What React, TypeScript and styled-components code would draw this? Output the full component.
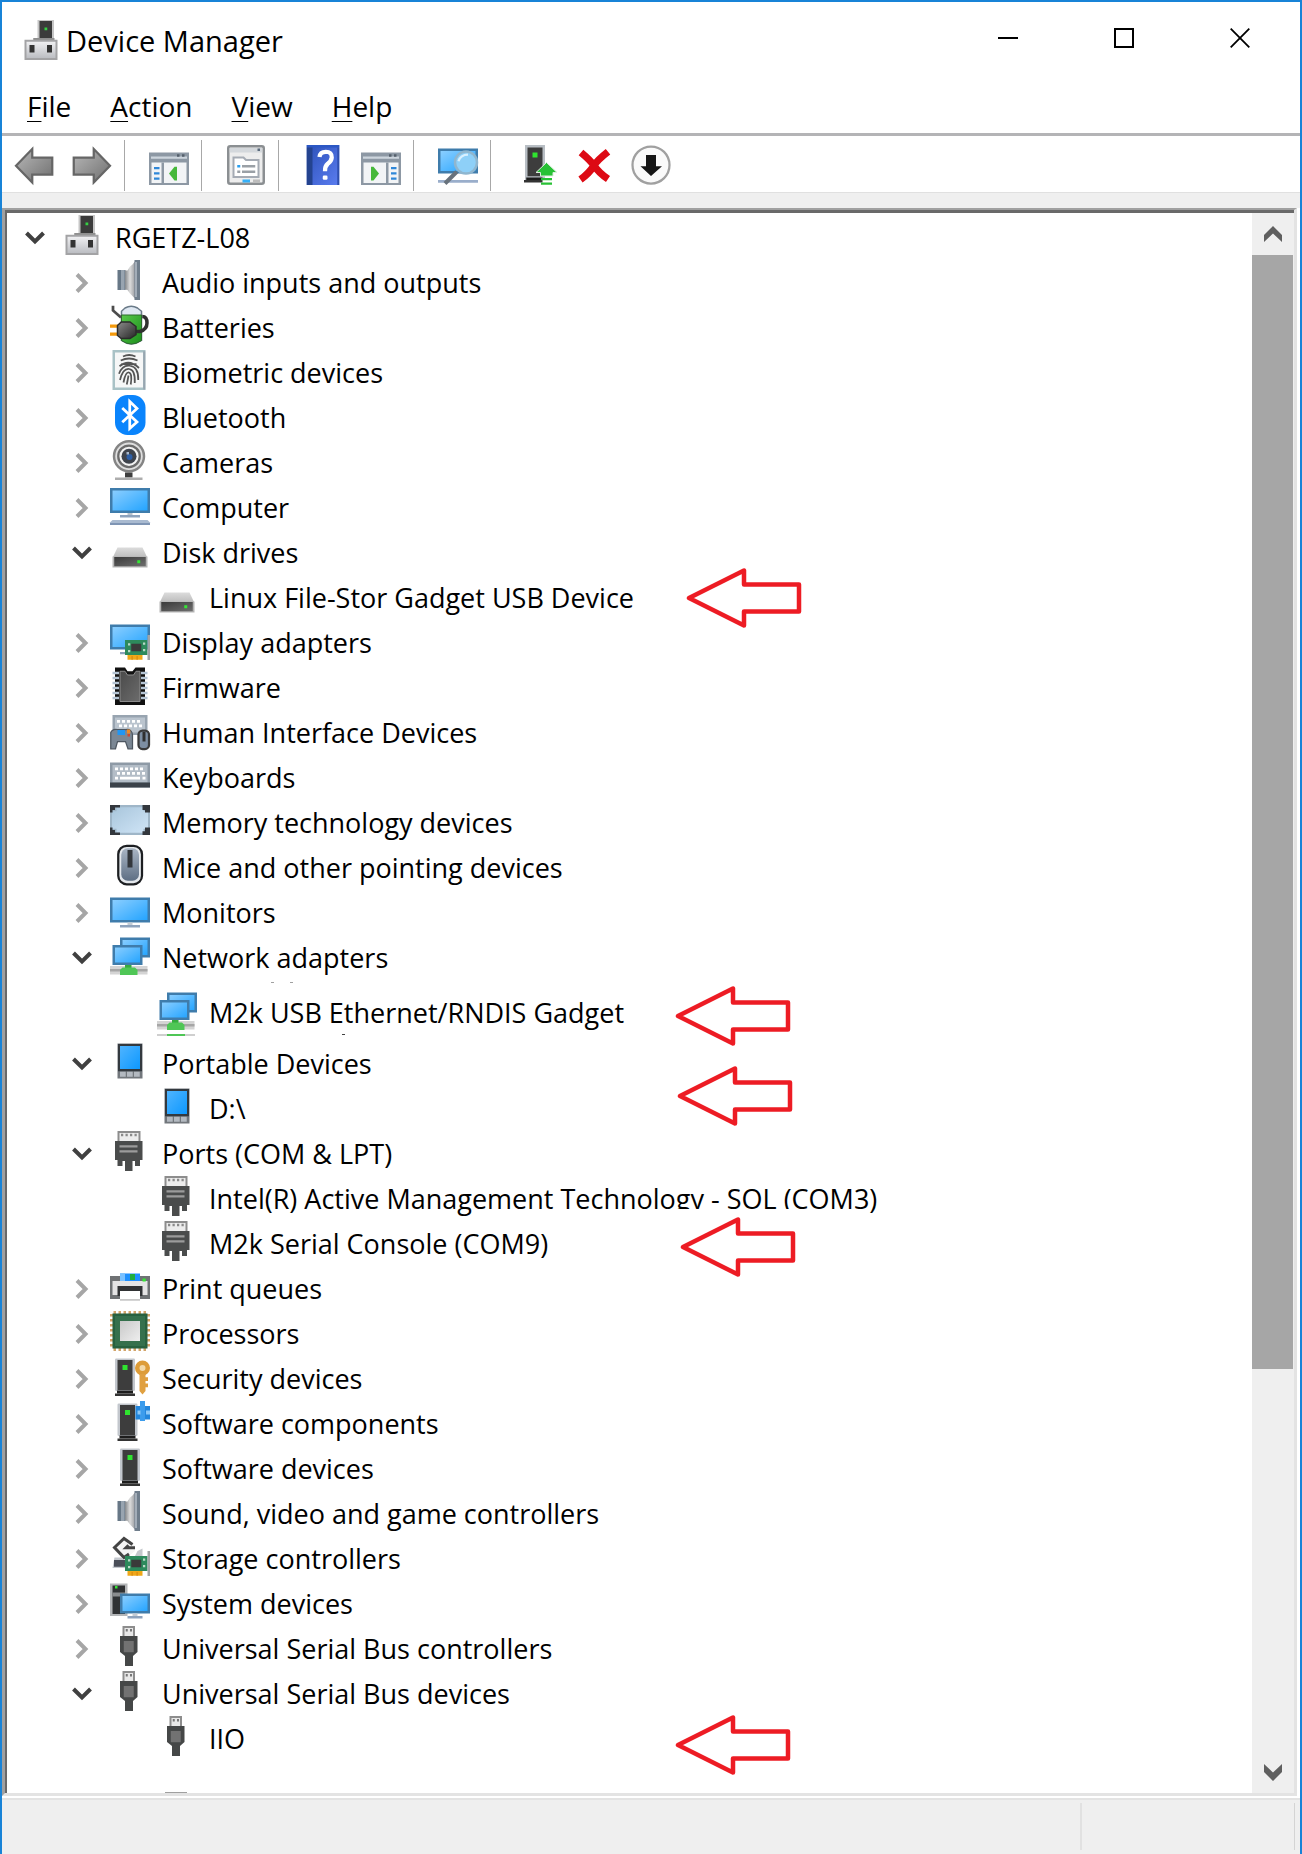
import React from "react";
import styled, { createGlobalStyle, css } from "styled-components";

const GlobalStyle = createGlobalStyle`
  * { box-sizing: border-box; }
  body { margin: 0; background: #ffffff; }
`;

/* ---------- window frame ---------- */

const Window = styled.main`
  display: flex;
  flex-direction: column;
  min-height: 100vh;
  border: 2px solid #1883d7;
  border-bottom: 0;
  background: #ffffff;
  color: #000000;
  font-family: "Open Sans", "Noto Sans", sans-serif;
  font-size: 28px;
  line-height: 45px;
`;

const TitleBar = styled.header`
  display: flex;
  align-items: center;
  height: 76px;
  padding: 0 2px 0 20px;
`;

const Title = styled.h1`
  flex: 1;
  margin: 0 0 0 4px;
  font-size: 29px;
  font-weight: 400;
`;

const WindowControls = styled.div`
  display: flex;
  align-self: flex-start;
`;

const plainButton = css`
  display: flex;
  align-items: center;
  justify-content: center;
  padding: 0;
  border: 0;
  background: none;
  color: inherit;
  font: inherit;
`;

const ControlButton = styled.button`
  ${plainButton}
  width: 116px;
  height: 72px;
`;

const MenuBar = styled.nav`
  display: flex;
  gap: 39px;
  height: 55px;
  padding: 2px 25px 0;
`;

const MenuButton = styled.button`
  ${plainButton}
`;

const AccessKey = styled.span`
  text-decoration: underline;
  text-decoration-thickness: 1px;
  text-underline-offset: 4px;
`;

const Toolbar = styled.div`
  display: flex;
  height: 59px;
  padding: 2px 3px 0;
  border-top: 3px solid #b4b4b6;
`;

const ToolButton = styled.button`
  ${plainButton}
  width: 58px;
`;

const ToolDivider = styled.span`
  width: 1px;
  margin: 2px 15px 1px 3px;
  background: #a8a8a8;
`;

const Band = styled.div`
  height: 16px;
  border-top: 1px solid #e0e0e0;
  background: #efefef;
`;

/* ---------- tree pane ---------- */

const Pane = styled.section`
  display: flex;
  flex: 1;
  margin-right: 3px;
  border-style: solid;
  border-width: 2px 3px 3px 3px;
  border-color: #a0a0a0 #e3e3e3 #e3e3e3 #a0a0a0;
`;

const PaneInner = styled.div`
  display: flex;
  flex: 1;
  border-top: 3px solid #696969;
  border-left: 2px solid #696969;
`;

const TreeArea = styled.div`
  position: relative;
  flex: 1;
  min-width: 0;
  overflow: hidden;
`;

const Tree = styled.ul`
  margin: 0;
  padding: 2px 0 0;
  list-style: none;
  font-size: 27px;
`;

const Row = styled.li<{ $level: number; $spaced?: boolean }>`
  display: flex;
  align-items: flex-start;
  height: 45px;
  margin: ${(p) => (p.$spaced ? "10px 0 6px" : "0")};
  padding-left: ${(p) => 14 + p.$level * 47}px;
`;

const Twisty = styled.button`
  ${plainButton}
  width: 28px;
  height: 45px;
  margin-right: 14px;
`;

const TwistySpace = styled.span`
  width: 28px;
  margin-right: 14px;
`;

const Label = styled.span`
  margin-left: 12px;
  white-space: nowrap;
`;

const Callout = styled.svg<{ $x: number; $y: number }>`
  position: absolute;
  left: ${(p) => p.$x}px;
  top: ${(p) => p.$y}px;
  width: 131px;
  height: 76px;
  background: #ffffff;
`;

const Fragment = styled.svg<{ $x: number; $y: number }>`
  position: absolute;
  left: ${(p) => p.$x}px;
  top: ${(p) => p.$y}px;
`;

const ScrollBar = styled.div`
  display: flex;
  flex-direction: column;
  width: 42px;
  background: #efefef;
`;

const ScrollButton = styled.button`
  ${plainButton}
  height: 42px;
`;

const ScrollThumb = styled.div`
  flex: 67;
  margin-right: 1px;
  background: #a6a6a6;
`;

const ScrollTrack = styled.div`
  flex: 23;
`;

const StatusBar = styled.footer`
  display: flex;
  height: 56px;
  margin-top: 2px;
  padding: 3px 5px 4px 0;
  border-top: 2px solid #e3e3e3;
  background: #efefef;
`;

const StatusText = styled.div`
  flex: 1;
`;

const StatusCell = styled.div`
  width: 215px;
  border-left: 2px solid #e1e1e1;
  border-right: 1px solid #d4d4d4;
`;

/* ---------- icons, all drawn on a 16 x 16 grid ---------- */

const Glyph = styled.svg`
  display: block;
  flex: none;
  width: 40px;
  height: 40px;
  overflow: visible;
`;

type BoxProps = { x: number; y: number; w: number; h: number; c: string; r?: number };
const Px = ({ x, y, w, h, c, r }: BoxProps) => (
  <rect x={x} y={y} width={w} height={h} fill={c} rx={r} />
);

const Grad = ({ id, a, b, v }: { id: string; a: string; b: string; v?: boolean }) => (
  <linearGradient id={id} x1="0" y1="0" x2={v ? 0 : 1} y2="1">
    <stop offset="0" stopColor={a} />
    <stop offset="1" stopColor={b} />
  </linearGradient>
);

const Hidden = styled.svg`
  position: absolute;
  width: 0;
  height: 0;
`;

const Palette = () => (
  <Hidden aria-hidden="true">
    <defs>
      <Grad id="screen" a="#8fd0ff" b="#1fa2ff" />
      <Grad id="phone" a="#4fb4ff" b="#0d98ff" />
      <Grad id="metal" a="#f2f2f4" b="#b9bbc0" v />
      <Grad id="lid" a="#dcdcdc" b="#bdbdbd" v />
      <Grad id="front" a="#3a3a3a" b="#6e6e6e" />
      <Grad id="chip" a="#4a4a4a" b="#6c6c6c" />
      <Grad id="silver" a="#c9c9c9" b="#eeeeee" />
      <Grad id="arrow" a="#b9b9b9" b="#6f6f6f" />
      <Grad id="help" a="#2b50b8" b="#5b7df0" />
      <Grad id="memory" a="#a9c6dc" b="#cfe4f6" />
      <Grad id="mouse" a="#a9b5c4" b="#5e6f84" v />
      <Grad id="green" a="#58c84a" b="#1c8f1c" />
      <Grad id="plug" a="#8b8b8b" b="#262626" />
      <linearGradient id="cone" x1="0" y1="0" x2="1" y2="0">
        <stop offset="0" stopColor="#85888b" />
        <stop offset="0.5" stopColor="#dcdcdc" />
        <stop offset="1" stopColor="#9c9ea2" />
      </linearGradient>
    </defs>
  </Hidden>
);

const Screen = ({ x, y, w, h }: { x: number; y: number; w: number; h: number }) => (
  <rect x={x + 0.5} y={y + 0.5} width={w - 1} height={h - 1} fill="url(#screen)" stroke="#3f7cab" />
);

const Tower = ({ x }: { x: number }) => (
  <>
    <Px x={x} y={1} w={8} h={13} c="#c3c7cd" r={0.5} />
    <Px x={x + 1} y={1.6} w={6} h={12} c="#3d3d3d" />
    <Px x={x + 3} y={3.6} w={2} h={2} c="#2fe52f" />
    <Px x={x + 0.8} y={13.8} w={6.4} h={1.2} c="#1d1d1d" />
    <Px x={x} y={15} w={8} h={1} c="#333333" />
  </>
);

const Board = () => (
  <>
    <Px x={6} y={8} w={9} h={6} c="#2d8a5c" />
    <Px x={8.5} y={9.5} w={4} h={3} c="#3a3a3a" />
    <Px x={7.2} y={9.3} w={0.9} h={0.9} c="#b9d8c6" />
    <Px x={7.2} y={12} w={0.9} h={0.9} c="#b9d8c6" />
    <Px x={13.2} y={9} w={0.9} h={0.9} c="#b9d8c6" />
    <Px x={13.2} y={11.6} w={0.9} h={0.9} c="#b9d8c6" />
    <Px x={7} y={14} w={6} h={1.9} c="#f0a818" />
    <Px x={8.6} y={14.4} w={0.5} h={1.5} c="#d98a10" />
    <Px x={10.6} y={14.4} w={0.5} h={1.5} c="#d98a10" />
    <Px x={15} y={6} w={1} h={10} c="#a2a4a6" />
  </>
);

const Keys = ({ x, y, n }: { x: number; y: number; n: number }) => (
  <>
    {Array.from({ length: n }, (_, i) => (
      <Px key={i} x={x + i * 2} y={y} w={1.2} h={1.1} c="#ffffff" />
    ))}
  </>
);

const icons: Record<string, React.ReactNode> = {
  root: (
    <>
      <Px x={6.2} y={0} w={6.6} h={8} c="#c6c6c6" />
      <Px x={7} y={0.4} w={5} h={7.2} c="#3b3b3b" />
      <Px x={9} y={3} w={1.1} h={1.1} c="#35d043" />
      <Px x={4.5} y={7.2} w={8.5} h={1} c="#8f8f8f" />
      <rect x={1.4} y={8.3} width={12.4} height={7.3} fill="url(#metal)" stroke="#a3a3a5" strokeWidth={0.8} />
      <Px x={3} y={10} w={2} h={3} c="#333333" />
      <Px x={10} y={10} w={2} h={3} c="#333333" />
    </>
  ),
  audio: (
    <>
      <Px x={3} y={4} w={3.2} h={8} c="#677786" />
      <Px x={4.4} y={4} w={1.4} h={8} c="#98a4b0" />
      <path d="M6 4.2H7L8 2.6 9 1.8 10 .5V15.5L9 14.4 8 13.4 7 12 6 11.8z" fill="url(#cone)" />
      <Px x={9.8} y={0} w={2.2} h={16} c="#6f7d8b" />
      <Px x={10} y={0.8} w={0.8} h={14} c="#a3adb8" />
    </>
  ),
  battery: (
    <>
      <path d="M6 1.2Q8.5-.2 11 1.2L12.6 2.5V14.2Q8.5 17 4.6 14.2V2.5z" fill="#dfe8f2" stroke="#6a7a88" strokeWidth={0.6} />
      <path d="M4.6 4H12.6V14.2Q8.5 17 4.6 14.2z" fill="url(#green)" stroke="#2c6b2c" strokeWidth={0.4} />
      <path d="M1.2.3V2.2L4.4 5" fill="none" stroke="#4c4c4c" strokeWidth={1.1} />
      <path d="M9 10.6H12Q14.8 9.8 14.8 7.2T12.9 4.6" fill="none" stroke="#303030" strokeWidth={1.4} />
      <Px x={0} y={7.8} w={3.2} h={1.3} c="#f59a0c" />
      <Px x={0} y={11} w={3.2} h={1.3} c="#f59a0c" />
      <path d="M3 8.2L4.5 6.8H8L10.4 8.6V11.8L8 13.4H4.5L3 12.2z" fill="url(#plug)" stroke="#2b2b2b" strokeWidth={0.6} />
    </>
  ),
  biometric: (
    <>
      <rect x={1.5} y={0.5} width={12.2} height={15} fill="#f6f7f7" stroke="#a9c2c6" />
      <Px x={13.3} y={0.5} w={0.8} h={15.3} c="#98a5b0" />
      <g fill="none" stroke="#555555" strokeWidth={0.7}>
        <path d="M5.2 2.6Q7.6 1.4 10.2 2.6M4.3 4.2Q7.6 2.6 11 4.2M3.8 6.5Q7.6 3.4 11.6 7.2M4.5 5.6H10.6" />
        <path d="M3.6 9.5Q5 5.8 8 6.3 11.5 6.8 11.3 12M4 12Q5.2 7.2 7.7 7.6 10.2 8 9.9 13.2M5.4 13Q6.2 8.8 7.5 9 9 9.2 8.3 13.8M6.7 13.8Q7.2 11.5 7.4 10.2" />
      </g>
    </>
  ),
  bluetooth: (
    <>
      <rect x={2} y={0} width={12.2} height={16} rx={5} fill="#0a84fc" />
      <path d="M4.9 5.2L10.8 10.8 7.9 13.4V2.6L10.8 5.4 4.9 10.9" fill="none" stroke="#ffffff" strokeWidth={1.1} />
    </>
  ),
  camera: (
    <>
      <circle cx={7.6} cy={6.5} r={6} fill="#dedede" stroke="#848484" strokeWidth={1} />
      <circle cx={7.6} cy={6.5} r={4.3} fill="#f2f2f2" stroke="#6b6b6b" strokeWidth={0.9} />
      <circle cx={7.6} cy={6.5} r={3} fill="#3e434c" />
      <circle cx={7.8} cy={6.8} r={1.2} fill="#2e5fa6" />
      <Px x={6.6} y={4.8} w={1} h={1} c="#a9b8cc" />
      <Px x={6} y={13} w={3} h={2} c="#3f3f3f" />
      <Px x={2} y={15} w={11} h={1} c="#adadad" />
    </>
  ),
  computer: (
    <>
      <Screen x={0} y={1.2} w={16} h={10} />
      <Px x={7} y={11.2} w={2} h={0.8} c="#b9c2cc" />
      <Px x={4} y={12} w={8} h={1} c="#8ea3bd" />
      <path d="M1 14H15L16 15V16H0V15z" fill="#a9bad0" />
      <Px x={0} y={15.2} w={16} h={0.8} c="#7f95b4" />
    </>
  ),
  disk: (
    <>
      <path d="M3 7H13L14.8 10.8H1.2z" fill="url(#lid)" />
      <Px x={1} y={10.6} w={14} h={4.4} c="#b5b5b5" />
      <rect x={1.7} y={10.8} width={12.6} height={3.7} fill="url(#front)" />
      <Px x={10.9} y={12.1} w={1.2} h={1.2} c="#35e635" />
    </>
  ),
  display: (
    <>
      <Screen x={0} y={1.8} w={16} h={10} />
      <Px x={4} y={12.8} w={4} h={0.9} c="#8ea3bd" />
      <Board />
    </>
  ),
  firmware: (
    <>
      <path d="M2 1H6L7 2.5H9L10.2 1H14V16H2z" fill="#111111" />
      <path d="M4 2.5H6L7 4H9.4L10.4 2.5H12V14.6H4z" fill="url(#chip)" stroke="#8c8c8c" strokeWidth={0.4} />
      {[2.7, 4.7, 6.7, 8.7, 10.7, 12.7].map((y) => (
        <g key={y}>
          <Px x={1} y={y} w={2.6} h={1} c="#b4c4d4" />
          <Px x={12.4} y={y} w={2.6} h={1} c="#b4c4d4" />
        </g>
      ))}
    </>
  ),
  hid: (
    <>
      <Px x={1} y={2} w={14} h={8} c="#98a4b0" />
      <Px x={2} y={3} w={12} h={6} c="#bac4ce" />
      <Keys x={2.8} y={4} n={5} />
      <Keys x={3.6} y={5.8} n={5} />
      <path d="M.3 9Q1 7.4 3 7.8H6.5Q8.8 7.6 9 10V15.5H7.2L6.2 12.6H3L2.2 15.5H.3z" fill="#7b8794" stroke="#4d5660" strokeWidth={0.5} />
      <Px x={3} y={8} w={3} h={2} c="#2196f3" />
      <Px x={6.8} y={7.8} w={1.3} h={1.6} c="#f08a24" />
      <Px x={7} y={9.6} w={1} h={1} c="#d8472b" />
      <rect x={11.4} y={8.2} width={4.2} height={7.4} rx={1.6} fill="#7d8ea2" stroke="#3a3a3a" strokeWidth={0.9} />
      <Px x={13} y={8.8} w={1.2} h={3.8} c="#303030" />
    </>
  ),
  keyboard: (
    <>
      <Px x={0} y={3} w={16} h={10} c="#8e9aa6" />
      <Px x={1} y={4} w={14} h={7} c="#b3bdc7" />
      <Keys x={2} y={5} n={6} />
      <Keys x={2.8} y={6.8} n={6} />
      <Px x={2} y={8.7} w={1.2} h={1.1} c="#ffffff" />
      <Px x={4} y={8.7} w={8} h={1.1} c="#ffffff" />
      <Px x={13} y={8.7} w={1.2} h={1.1} c="#ffffff" />
      <Px x={0} y={11} w={16} h={2} c="#3b424a" />
    </>
  ),
  memory: (
    <>
      <Px x={0} y={2} w={16} h={12} c="#9fb6c8" />
      <path d="M2.6 2.9H13.4V4.5H15.2V11.5H13.4V13.1H2.6V11.5H.8V4.5H2.6z" fill="url(#memory)" />
      <path d="M0 2H4V3H2V4H1V5H0zM16 2H13V4H14V5H16zM0 14H4V13H2V12H1V11H0zM16 14H13V12.5H14V11H16z" fill="#33373d" />
    </>
  ),
  mouse: (
    <>
      <rect x={3.3} y={0.3} width={9.5} height={15.4} rx={3.4} fill="#e4e8ec" stroke="#1d1f22" strokeWidth={0.9} />
      <rect x={4.5} y={1.3} width={7.1} height={13} rx={2.6} fill="url(#mouse)" />
      <Px x={7} y={2} w={2} h={7} c="#33373c" />
    </>
  ),
  monitor: (
    <>
      <Screen x={0} y={3} w={16} h={10} />
      <Px x={7} y={13} w={2} h={1} c="#c4ccd4" />
      <Px x={4} y={14} w={8} h={1} c="#8ea3bd" />
    </>
  ),
  network: (
    <>
      <Screen x={4} y={1} w={12} h={8} />
      <Screen x={1} y={4} w={12} h={8} />
      <Px x={0} y={12.4} w={15} h={3.4} c="#d4d4d4" />
      <Px x={0} y={13.6} w={15} h={1} c="#a6a6a6" />
      <Px x={6} y={12} w={2.6} h={1.4} c="#35ac3f" />
      <path d="M5 13H10L11 14V16H4V14z" fill="#4fc656" />
    </>
  ),
  portable: (
    <>
      <Px x={3} y={1} w={10} h={14} c="#72777c" />
      <Px x={3.2} y={1.2} w={9.6} h={10.9} c="#33393f" />
      <rect x={4} y={2} width={8} height={9.2} fill="url(#phone)" />
      {[4, 6.8, 9.6].map((x) => (
        <Px key={x} x={x} y={12.3} w={2.3} h={2} c="#b3b9c0" />
      ))}
    </>
  ),
  port: (
    <>
      <rect x={3.4} y={0.4} width={8.4} height={4} fill="#ececec" stroke="#8d8d8d" strokeWidth={0.8} />
      {[4.4, 6.2, 8, 9.8].map((x) => (
        <Px key={x} x={x} y={1.1} w={0.9} h={1} c="#8a8a8a" />
      ))}
      <path d="M2 4H13V11.6H12V14H10V12H9V16H6V12H5V14H3V11.6H2z" fill="#4a4c4c" />
      <Px x={3.8} y={5.7} w={7.2} h={0.9} c="#9b9b9b" />
      <Px x={3.8} y={7.7} w={7.2} h={0.9} c="#9b9b9b" />
    </>
  ),
  printer: (
    <>
      <Px x={0} y={4} w={16} h={9.2} c="#6f7274" />
      <Px x={1} y={6} w={14} h={5.6} c="#e4e4e4" />
      <Px x={4} y={3} w={8} h={3} c="#1e90ff" />
      <Px x={4} y={3} w={2} h={3} c="#79c1ff" />
      <Px x={8} y={3.2} w={2} h={2.4} c="#1fae3d" />
      <Px x={13} y={5} w={1.3} h={1.2} c="#35e635" />
      <Px x={3} y={8} w={10} h={4} c="#303234" />
      <Px x={4} y={10} w={8} h={4} c="#ffffff" />
      <Px x={4} y={13.2} w={8} h={0.7} c="#c8c8c8" />
    </>
  ),
  processor: (
    <>
      {[1, 3, 5, 7, 9, 11, 13].map((p) => (
        <g key={p}>
          <Px x={p + 0.4} y={0} w={1} h={16} c="#d2a46a" />
          <Px x={0} y={p + 0.2} w={16} h={1} c="#d2a46a" />
        </g>
      ))}
      <Px x={1} y={1} w={14} h={14} c="#27613f" />
      <Px x={2} y={2} w={12} h={12} c="#35704c" />
      <rect x={4} y={4} width={8} height={8} fill="url(#silver)" />
    </>
  ),
  security: (
    <>
      <Tower x={2} />
      <circle cx={13} cy={4.8} r={2.1} fill="#f3d9a8" stroke="#dd9c38" strokeWidth={1.8} />
      <path d="M11.8 7.2H14.2V8.5H15.2V10H14.2V11H15.2V12.5H14.2V14L13 15.4 11.8 14z" fill="#e0a040" />
    </>
  ),
  component: (
    <>
      <Tower x={3} />
      <Px x={10.2} y={2} w={5.8} h={5.4} c="#2386dc" />
      <Px x={12} y={0} w={2} h={8} c="#3c9cec" />
      <Px x={11} y={3.8} w={1.2} h={1.6} c="#8cc8f8" />
      <Px x={14.4} y={3.8} w={1.6} h={1.6} c="#8cc8f8" />
    </>
  ),
  software: <Tower x={4} />,
  storage: (
    <>
      <path d="M1.8 8.6H8V12.8H1z" fill="#c3c7cd" />
      <Px x={1.6} y={9.6} w={5} h={2.7} c="#4a4e58" />
      <path d="M5.6.2L10 4V6L5.6 9.6 1 5z" fill="#f4f4f4" />
      <path d="M9 3.4L5.6 1 1.8 4.6 5.6 8.6 7.6 7.2M10 4.7H6.4L7.4 3.7" fill="none" stroke="#444444" strokeWidth={1.2} />
      <path d="M11 6L13 5V8H10z" fill="#c4c8cc" />
      <Board />
    </>
  ),
  system: (
    <>
      <Px x={0} y={1} w={7} h={13} c="#b4b6b8" />
      <Px x={1} y={1.8} w={5} h={11.4} c="#303234" />
      <Px x={2} y={2} w={1} h={1} c="#35e635" />
      <Px x={1} y={4.6} w={5} h={1.6} c="#8a8c8e" />
      <Screen x={4} y={5} w={12} h={8} />
      <Px x={9} y={13} w={2} h={1} c="#c4ccd4" />
      <Px x={7} y={14} w={6} h={1} c="#8ea3bd" />
    </>
  ),
  usb: (
    <>
      <rect x={5.4} y={0.4} width={4.2} height={4} fill="#e8e8e8" stroke="#8d8d8d" strokeWidth={0.8} />
      <Px x={6.3} y={1.2} w={0.8} h={1} c="#777777" />
      <Px x={8} y={1.2} w={0.8} h={1} c="#777777" />
      <path d="M4 4H11V10.4L9.2 12V16H6V12L4 10.4z" fill="#454747" />
      <Px x={5.5} y={6} w={4} h={4.5} c="#727272" />
    </>
  ),
  back: (
    <path d="M.8 8.3L7.3 1.6V5H15.3V11.8H7.3V15z" fill="url(#arrow)" stroke="#666666" strokeWidth={0.9} />
  ),
  forward: (
    <path d="M15.2 8.3L8.7 1.6V5H.7V11.8H8.7V15z" fill="url(#arrow)" stroke="#666666" strokeWidth={0.9} />
  ),
  showTree: (
    <>
      <Px x={0} y={3} w={16} h={13} c="#8d98a4" />
      <Px x={0.8} y={4.6} w={14.4} h={0.9} c="#cdd5dd" />
      <Px x={11.2} y={3.7} w={1} h={1} c="#55606c" />
      <Px x={13.2} y={3.7} w={1} h={1} c="#55606c" />
      <Px x={1} y={7} w={14} h={8.2} c="#f2f4f6" />
      <Px x={5} y={7} w={1} h={8.2} c="#8d98a4" />
      <Px x={2} y={8.8} w={2.2} h={0.9} c="#2f87d8" />
      <Px x={2} y={10.9} w={2.2} h={0.9} c="#2f87d8" />
      <Px x={2} y={13} w={2.2} h={0.9} c="#2f87d8" />
      <path d="M11.2 8.7V14.2H10.2L8 11.4 10.2 8.7z" fill="#46b83a" />
    </>
  ),
  showAction: (
    <>
      <Px x={0} y={3} w={16} h={13} c="#8d98a4" />
      <Px x={0.8} y={4.6} w={14.4} h={0.9} c="#cdd5dd" />
      <Px x={11.2} y={3.7} w={1} h={1} c="#55606c" />
      <Px x={13.2} y={3.7} w={1} h={1} c="#55606c" />
      <Px x={1} y={7} w={14} h={8.2} c="#f2f4f6" />
      <Px x={10} y={7} w={1} h={8.2} c="#8d98a4" />
      <Px x={12} y={8.8} w={2.2} h={0.9} c="#2f87d8" />
      <Px x={12} y={10.9} w={2.2} h={0.9} c="#2f87d8" />
      <Px x={12} y={13} w={2.2} h={0.9} c="#2f87d8" />
      <path d="M4 8.7V14.2H5L7.2 11.4 5 8.7z" fill="#46b83a" />
    </>
  ),
  properties: (
    <>
      <rect x={0.9} y={0.5} width={14.2} height={15} rx={0.8} fill="#ededed" stroke="#8b8f92" />
      <Px x={1.5} y={1.2} w={13} h={1.8} c="#d4d8dc" />
      <Px x={12.6} y={1.4} w={1} h={1} c="#5b6b7c" />
      <path d="M3 5H7L8 6H13V12.8H3z" fill="#ffffff" stroke="#a5abb4" strokeWidth={0.8} />
      <Px x={4.5} y={8} w={1.2} h={1} c="#2aa0f0" />
      <Px x={6.4} y={8} w={5.3} h={1} c="#9aa0a6" />
      <Px x={4.5} y={10.2} w={1.2} h={1} c="#9aa0a6" />
      <Px x={6.4} y={10.2} w={5.3} h={1} c="#9aa0a6" />
      <Px x={6.6} y={13.8} w={3} h={1.2} c="#35b0f8" />
      <Px x={10.8} y={13.8} w={2.8} h={1.2} c="#bcbcbc" />
    </>
  ),
  help: (
    <>
      <rect x={1.5} y={0} width={13} height={16} fill="url(#help)" />
      <Px x={1.5} y={0} w={13} h={1} c="#2b57c4" />
      <Px x={1.5} y={1} w={2.3} h={15} c="#24438f" />
      <Px x={13.7} y={1} w={0.8} h={15} c="#2f4fae" />
      <path d="M6.6 4.8Q6.8 2.7 9.1 2.7 11.6 2.8 11.5 5 11.4 6.4 9.9 7.5 8.7 8.5 8.8 10.5" fill="none" stroke="#ffffff" strokeWidth={1.7} />
      <Px x={7.9} y={12.2} w={1.9} h={1.7} c="#ffffff" r={0.5} />
    </>
  ),
  scan: (
    <>
      <Screen x={0} y={1.4} w={16} h={10} />
      <Px x={0} y={14} w={16} h={1.1} c="#9aaecb" />
      <path d="M7.5 10.7L2.8 15.4" stroke="#68727c" strokeWidth={1.6} />
      <circle cx={11.2} cy={7} r={4.4} fill="#8ed0f8" stroke="#8fb6cf" strokeWidth={1} />
      <path d="M8.2 6.5Q9 3.8 12 3.8" fill="none" stroke="#d8f0ff" strokeWidth={0.9} />
    </>
  ),
  update: (
    <>
      <Px x={4} y={0} w={8} h={14} c="#b8bec4" />
      <Px x={5} y={1} w={6} h={11.5} c="#3d3d3d" />
      <Px x={7} y={3} w={2} h={2} c="#2fe52f" />
      <Px x={4.5} y={13} w={6.5} h={1} c="#1d1d1d" />
      <Px x={3.6} y={14} w={7.4} h={1} c="#333333" />
      <path d="M12.6 7L16.8 11H15.2V12.4H10.2V11H8.4z" fill="#28c135" stroke="#dfeee0" strokeWidth={0.4} />
      <Px x={10.4} y={13.2} w={4.4} h={0.9} c="#28c135" />
      <Px x={10.4} y={15} w={4.4} h={0.9} c="#28c135" />
    </>
  ),
  uninstall: (
    <path d="M3.2 3Q6.8 6 8.4 8.2 10.4 11.2 14 13.6M14 2.7Q9.8 6 8.4 8.2 6.4 11.4 3 13.8" fill="none" stroke="#dd0a14" strokeWidth={2.9} />
  ),
  disable: (
    <>
      <circle cx={8} cy={8} r={7.4} fill="#fafafa" stroke="#a0a0a0" strokeWidth={0.9} />
      <path d="M6 4H10V8.5H12.4L8 12.4 3.8 8.5H6z" fill="#161616" />
    </>
  ),
};

const Icon = ({ name }: { name: string }) => (
  <Glyph viewBox="0 0 16 16" aria-hidden="true">
    {icons[name]}
  </Glyph>
);

/* ---------- data ---------- */

type Node = { level: number; icon: string; text: string; state?: "open" | "closed"; spaced?: boolean };

const nodes: Node[] = [
  { level: 0, icon: "root", text: "RGETZ-L08", state: "open" },
  { level: 1, icon: "audio", text: "Audio inputs and outputs", state: "closed" },
  { level: 1, icon: "battery", text: "Batteries", state: "closed" },
  { level: 1, icon: "biometric", text: "Biometric devices", state: "closed" },
  { level: 1, icon: "bluetooth", text: "Bluetooth", state: "closed" },
  { level: 1, icon: "camera", text: "Cameras", state: "closed" },
  { level: 1, icon: "computer", text: "Computer", state: "closed" },
  { level: 1, icon: "disk", text: "Disk drives", state: "open" },
  { level: 2, icon: "disk", text: "Linux File-Stor Gadget USB Device" },
  { level: 1, icon: "display", text: "Display adapters", state: "closed" },
  { level: 1, icon: "firmware", text: "Firmware", state: "closed" },
  { level: 1, icon: "hid", text: "Human Interface Devices", state: "closed" },
  { level: 1, icon: "keyboard", text: "Keyboards", state: "closed" },
  { level: 1, icon: "memory", text: "Memory technology devices", state: "closed" },
  { level: 1, icon: "mouse", text: "Mice and other pointing devices", state: "closed" },
  { level: 1, icon: "monitor", text: "Monitors", state: "closed" },
  { level: 1, icon: "network", text: "Network adapters", state: "open" },
  { level: 2, icon: "network", text: "M2k USB Ethernet/RNDIS Gadget", spaced: true },
  { level: 1, icon: "portable", text: "Portable Devices", state: "open" },
  { level: 2, icon: "portable", text: "D:\\" },
  { level: 1, icon: "port", text: "Ports (COM & LPT)", state: "open" },
  { level: 2, icon: "port", text: "Intel(R) Active Management Technology - SOL (COM3)" },
  { level: 2, icon: "port", text: "M2k Serial Console (COM9)" },
  { level: 1, icon: "printer", text: "Print queues", state: "closed" },
  { level: 1, icon: "processor", text: "Processors", state: "closed" },
  { level: 1, icon: "security", text: "Security devices", state: "closed" },
  { level: 1, icon: "component", text: "Software components", state: "closed" },
  { level: 1, icon: "software", text: "Software devices", state: "closed" },
  { level: 1, icon: "audio", text: "Sound, video and game controllers", state: "closed" },
  { level: 1, icon: "storage", text: "Storage controllers", state: "closed" },
  { level: 1, icon: "system", text: "System devices", state: "closed" },
  { level: 1, icon: "usb", text: "Universal Serial Bus controllers", state: "closed" },
  { level: 1, icon: "usb", text: "Universal Serial Bus devices", state: "open" },
  { level: 2, icon: "usb", text: "IIO" },
];

const toolGroups: { icon: string; label: string }[][] = [
  [
    { icon: "back", label: "Back" },
    { icon: "forward", label: "Forward" },
  ],
  [{ icon: "showTree", label: "Show or hide console tree" }],
  [{ icon: "properties", label: "Properties" }],
  [
    { icon: "help", label: "Help" },
    { icon: "showAction", label: "Show or hide action pane" },
  ],
  [{ icon: "scan", label: "Scan for hardware changes" }],
  [
    { icon: "update", label: "Update driver" },
    { icon: "uninstall", label: "Uninstall device" },
    { icon: "disable", label: "Disable device" },
  ],
];

/* Marks drawn over the tree, placed from its top left corner. */
const callouts = [
  { x: 671, y: 347 },
  { x: 660, y: 765 },
  { x: 662, y: 845 },
  { x: 665, y: 996 },
  { x: 660, y: 1494 },
];

export default function App() {
  return (
    <>
      <GlobalStyle />
      <Palette />
      <Window>
        <TitleBar>
          <Icon name="root" />
          <Title>Device Manager</Title>
          <WindowControls>
            <ControlButton aria-label="Minimize">
              <svg width="20" height="20" aria-hidden="true">
                <path d="M0 10H20" stroke="#000000" strokeWidth="2" />
              </svg>
            </ControlButton>
            <ControlButton aria-label="Maximize">
              <svg width="20" height="20" aria-hidden="true">
                <rect x="1" y="1" width="18" height="18" fill="none" stroke="#000000" strokeWidth="2" />
              </svg>
            </ControlButton>
            <ControlButton aria-label="Close">
              <svg width="20" height="20" aria-hidden="true">
                <path d="M.7.7L19.3 19.3M19.3.7L.7 19.3" stroke="#000000" strokeWidth="1.8" />
              </svg>
            </ControlButton>
          </WindowControls>
        </TitleBar>
        <MenuBar>
          {["File", "Action", "View", "Help"].map((m) => (
            <MenuButton key={m}>
              <span>
                <AccessKey>{m[0]}</AccessKey>
                {m.slice(1)}
              </span>
            </MenuButton>
          ))}
        </MenuBar>
        <Toolbar>
          {toolGroups.map((group, i) => (
            <React.Fragment key={i}>
              {i > 0 && <ToolDivider />}
              {group.map((t) => (
                <ToolButton key={t.icon} aria-label={t.label}>
                  <Icon name={t.icon} />
                </ToolButton>
              ))}
            </React.Fragment>
          ))}
        </Toolbar>
        <Band />
        <Pane>
          <PaneInner>
            <TreeArea>
              <Tree>
                {nodes.map((n) => (
                  <Row key={n.text} $level={n.level} $spaced={n.spaced}>
                    {n.state ? (
                      <Twisty aria-label={n.state === "open" ? "Collapse" : "Expand"} aria-expanded={n.state === "open"}>
                        {n.state === "open" ? (
                          <svg width="20" height="14" aria-hidden="true">
                            <path d="M1.5 2L10 10.5 18.5 2" fill="none" stroke="#404040" strokeWidth="4" />
                          </svg>
                        ) : (
                          <svg width="14" height="20" aria-hidden="true">
                            <path d="M2 1.5L10.5 10 2 18.5" fill="none" stroke="#a6a6a6" strokeWidth="4" />
                          </svg>
                        )}
                      </Twisty>
                    ) : (
                      <TwistySpace />
                    )}
                    <Icon name={n.icon} />
                    <Label>{n.text}</Label>
                  </Row>
                ))}
              </Tree>
              <Fragment $x={264} $y={769} width="24" height="1" aria-hidden="true">
                <path d="M0 .5H3M19 .5H22" stroke="#a0a0a0" />
              </Fragment>
              <Fragment $x={150} $y={821} width="190" height="2" aria-hidden="true">
                <path d="M0 1H38" stroke="#cfcfcf" strokeWidth="2" />
                <path d="M10 1H28" stroke="#4fc656" strokeWidth="2" />
                <path d="M185 .5H188" stroke="#404040" strokeWidth="1" />
              </Fragment>
              <Fragment $x={158} $y={1579} width="22" height="1" aria-hidden="true">
                <path d="M0 .5H22" stroke="#a0a0a0" />
              </Fragment>
              {callouts.map((c) => (
                <Callout key={c.y} $x={c.x} $y={c.y} viewBox="0 0 131 76" aria-hidden="true">
                  <path d="M11 38L66 10.5V24.5H121V51.5H66V65.5z" fill="none" stroke="#ed1c24" strokeWidth="4.5" strokeLinejoin="round" />
                </Callout>
              ))}
            </TreeArea>
            <ScrollBar>
              <ScrollButton aria-label="Scroll up">
                <svg width="18" height="17" aria-hidden="true">
                  <path d="M0 9L9 0 18 9V16L9 7.5 0 16z" fill="#5f5f5f" />
                </svg>
              </ScrollButton>
              <ScrollThumb />
              <ScrollTrack />
              <ScrollButton aria-label="Scroll down">
                <svg width="18" height="17" aria-hidden="true">
                  <path d="M0 8L9 17 18 8V0L9 8.5 0 0z" fill="#5f5f5f" />
                </svg>
              </ScrollButton>
            </ScrollBar>
          </PaneInner>
        </Pane>
        <StatusBar>
          <StatusText />
          <StatusCell />
        </StatusBar>
      </Window>
    </>
  );
}
